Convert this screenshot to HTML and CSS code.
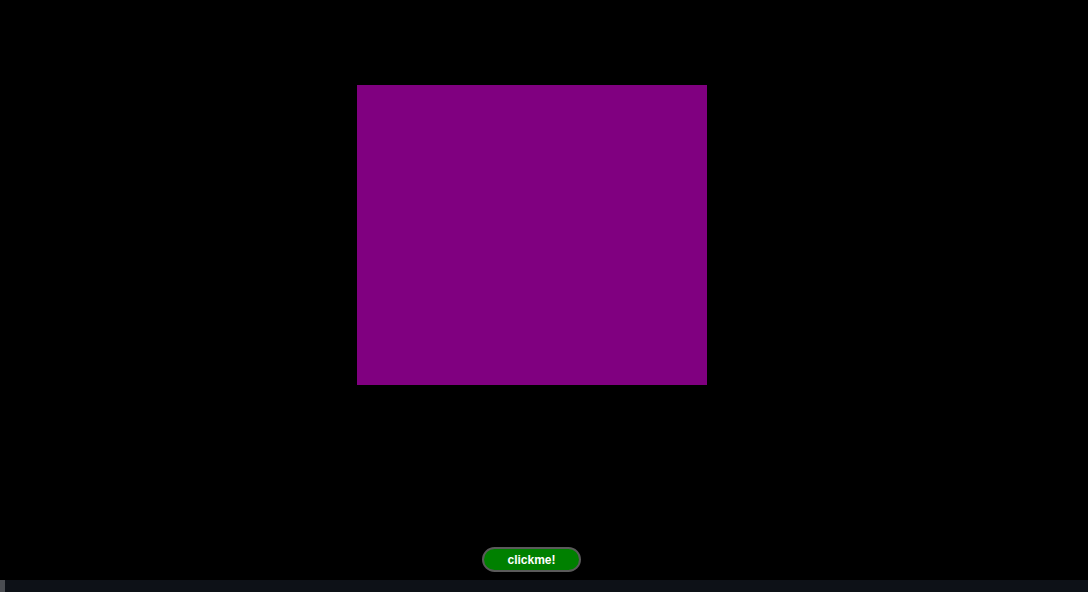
FILE: index.html
```html
<!DOCTYPE html>
<html>
<head>
<meta charset="utf-8">
<link rel="stylesheet" href="styles.css">
</head>
<body>
<div class="page">
  <main class="stage">
    <div class="box"></div>
    <button class="btn">clickme!</button>
  </main>
  <div class="hbar"><div class="thumb"></div></div>
</div>
</body>
</html>
```
FILE: styles.css
```css
html, body {
  margin: 0;
  padding: 0;
  background: #000;
  height: 100%;
  overflow: hidden;
}
.page {
  display: flex;
  flex-direction: column;
  height: 592px;
  width: 1088px;
}
.stage {
  flex: 1;
  display: flex;
  flex-direction: column;
  align-items: center;
  padding: 85px 24px 0 0;
}
.box {
  width: 350px;
  height: 300px;
  background: #800080;
}
.btn {
  margin: 162px 1px 0 0;
  width: 99px;
  height: 25px;
  background: #008000;
  border: 2px solid #5a5a5a;
  border-radius: 13px;
  color: #fff;
  font-family: "Liberation Sans", Arial, sans-serif;
  font-weight: bold;
  font-size: 12px;
  padding: 0;
  box-sizing: border-box;
}
.hbar {
  height: 12px;
  background: #0d1117;
  display: flex;
}
.thumb {
  width: 5px;
  background: #4a4d52;
}
```
